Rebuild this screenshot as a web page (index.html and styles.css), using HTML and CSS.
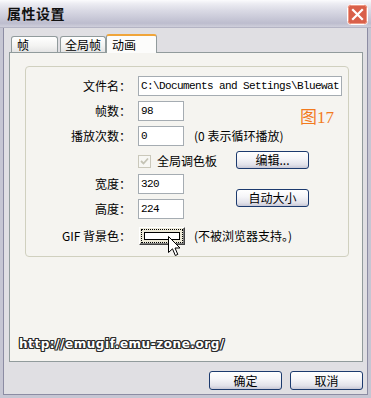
FILE: index.html
```html
<!DOCTYPE html>
<html lang="zh-CN">
<head>
    <meta charset="UTF-8">
    <title>属性设置</title>
    <link rel="stylesheet" href="styles.css">
</head>
<body>
    <div class="window">
        <div class="titlebar">
            <span class="title">属性设置</span>
            <button class="close" aria-label="关闭">
                <svg width="21" height="21" viewBox="0 0 21 21">
                    <rect x="0.5" y="0.5" width="20" height="20" rx="3" fill="#d9604a" stroke="#ffffff"/>
                    <rect x="1.5" y="1.5" width="18" height="18" rx="2" fill="none" stroke="#ef9a86"/>
                    <path d="M6 6 L15 15 M15 6 L6 15" stroke="#ffffff" stroke-width="2.2" stroke-linecap="square"/>
                </svg>
            </button>
        </div>

        <div class="client">
            <div class="tabs">
                <div class="tab">帧</div>
                <div class="tab tab-wide">全局帧</div>
                <div class="tab active">动画</div>
            </div>

            <div class="panel">
                <div class="group">
                    <div class="form">
                        <label class="lbl">文件名：</label>
                        <input class="field field-file" type="text" value="C:\Documents and Settings\Bluewat">

                        <label class="lbl">帧数：</label>
                        <input class="field" type="text" value="98">
                        <span></span>

                        <label class="lbl">播放次数：</label>
                        <input class="field" type="text" value="0">
                        <span class="hint">(0 表示循环播放)</span>

                        <span></span>
                        <div class="check-row">
                            <div class="check-wrap">
                                <span class="checkbox">
                                    <svg width="9" height="9" viewBox="0 0 9 9">
                                        <path d="M1 4 L3.5 6.5 L8 1.5" fill="none" stroke="#c4c3b5" stroke-width="1.8"/>
                                    </svg>
                                </span>
                                <span>全局调色板</span>
                            </div>
                            <button class="btn">编辑...</button>
                        </div>

                        <label class="lbl">宽度：</label>
                        <input class="field" type="text" value="320">
                        <div class="auto-cell">
                            <button class="btn">自动大小</button>
                        </div>

                        <label class="lbl">高度：</label>
                        <input class="field" type="text" value="224">

                        <label class="lbl lbl-last">GIF 背景色：</label>
                        <div class="color-cell">
                            <button class="color-btn"><span class="swatch"></span></button>
                            <svg class="cursor" width="13" height="21" viewBox="0 0 13 21">
                                <path d="M0.5 0.5 L0.5 16.5 L4.5 12.8 L7.3 19.5 L9.8 18.4 L7 12 L12 12 Z" fill="#ffffff" stroke="#000000" stroke-width="1"/>
                            </svg>
                        </div>
                        <span class="hint hint-last">(不被浏览器支持。)</span>
                    </div>
                    <span class="note">图17</span>
                </div>

                <div class="url">http://emugif.emu-zone.org/</div>
            </div>

            <div class="actions">
                <button class="btn">确定</button>
                <button class="btn">取消</button>
            </div>
        </div>
    </div>
</body>
</html>
```

FILE: styles.css
```css
* {
    margin: 0;
    padding: 0;
    box-sizing: border-box;
    font-family: 'Noto Sans CJK SC', sans-serif;
}

body {
    background-color: #e0dfe3;
}

.window {
    width: 371px;
    height: 398px;
    display: flex;
    flex-direction: column;
    background-color: #e0dfe3;
}

.titlebar {
    height: 28px;
    display: flex;
    align-items: center;
    justify-content: space-between;
    padding: 0 3px 0 7px;
    background: linear-gradient(to bottom, #fbfbfd 0%, #ececf2 14%, #d9d9e4 40%, #c8c8d7 68%, #bdbdce 86%, #cfcfdb 100%);
    border-bottom: 1px solid #b4b4c4;
}

.title {
    font-size: 14px;
    font-weight: bold;
    color: #111;
    letter-spacing: 0.5px;
    margin-top: -1px;
}

.close {
    width: 21px;
    height: 21px;
    border: none;
    background: none;
    display: block;
    margin-top: 1px;
}

.close svg {
    display: block;
}

.client {
    flex: 1;
    display: flex;
    flex-direction: column;
    border: solid #c6c6d3;
    border-width: 0 3px 3px;
    box-shadow: inset 1px 0 #8c8ca3, inset -1px 0 #8c8ca3, inset 0 -1px #8c8ca3;
}

/* tabs */
.tabs {
    display: flex;
    align-items: flex-end;
    padding: 6px 0 0 8px;
    height: 24px;
}

.tab {
    width: 47px;
    height: 16px;
    margin-right: 2px;
    padding: 0 0 0 5px;
    font-size: 12px;
    line-height: 15px;
    color: #000;
    border: 1px solid #919b9c;
    border-bottom: none;
    border-radius: 3px 3px 0 0;
    background: linear-gradient(to bottom, #ffffff, #f3f3f1 60%, #e4e4e4);
}

.tab-wide {
    width: 46px;
    padding-left: 4px;
    margin-right: 0;
}

.tab.active {
    width: 51px;
    height: 19px;
    padding-left: 5px;
    line-height: 17px;
    background: #fcfcfb;
    border-top: 2px solid #f0a53a;
    margin-bottom: -1px;
    position: relative;
}

.panel {
    height: 310px;
    margin: 0 5px 0 6px;
    border: 1px solid #919b9c;
    background-color: #f5f4f0;
    padding: 13px 0 0 15px;
}

/* group box */
.group {
    position: relative;
    width: 324px;
    height: 191px;
    border: 1px solid #d0d0bf;
    border-radius: 4px;
    padding: 9px 6px 0 0;
}

.form {
    display: grid;
    grid-template-columns: 112px 46px 1fr;
    grid-template-rows: 20px 20px 20px 18px 20px 20px 21px;
    row-gap: 5px;
    font-size: 12px;
    color: #000;
}

.lbl {
    text-align: right;
    padding-right: 7px;
    align-self: center;
    font-size: 12px;
    line-height: 14px;
}

.lbl-last {
    margin-top: 3px;
}

.field {
    width: 46px;
    height: 20px;
    border: 1px solid #a5acb2;
    background: #fff;
    padding: 0 0 0 2px;
    font-family: 'Liberation Mono', monospace;
    font-size: 11px;
    letter-spacing: -0.6px;
    color: #000;
    outline: none;
}

.field-file {
    grid-column: 2 / 4;
    width: 204px;
}

.hint {
    align-self: center;
    margin-left: 10px;
    white-space: nowrap;
    line-height: 14px;
}

.hint-last {
    margin-top: 3px;
}

.check-row {
    grid-column: 2 / 4;
    display: flex;
    align-items: center;
}

.check-wrap {
    width: 98px;
    display: flex;
    align-items: center;
    gap: 6px;
    white-space: nowrap;
}

.checkbox {
    width: 13px;
    height: 13px;
    border: 1px solid #cac8bb;
    background: #f7f7f4;
    display: flex;
    align-items: center;
    justify-content: center;
    margin-top: 2px;
}

.checkbox svg {
    display: block;
}

.auto-cell {
    grid-row: span 2;
    display: flex;
    align-items: center;
    padding-left: 52px;
    padding-top: 3px;
}

.btn {
    width: 73px;
    height: 18px;
    border: 1px solid #1c3a6e;
    border-radius: 3px;
    background: linear-gradient(to bottom, #ffffff 0%, #f6f6f9 40%, #e2e2ea 80%, #c8c8d6 100%);
    font-size: 12px;
    line-height: 14px;
    color: #000;
}

.color-cell {
    position: relative;
    align-self: end;
    padding-left: 1px;
}

.color-btn {
    width: 46px;
    height: 18px;
    display: block;
    background: #ece9d8;
    border: 1px solid;
    border-color: #ffffff #404040 #404040 #ffffff;
    box-shadow: inset -1px -1px #808080;
    padding: 2px;
}

.swatch {
    display: block;
    height: 12px;
    outline: 1px dotted #000;
    outline-offset: 0;
    border: 2px solid #ece9d8;
    background: #fff;
    box-shadow: inset 0 0 0 1px #000;
}

.cursor {
    position: absolute;
    left: 30px;
    top: 9px;
}

.note {
    position: absolute;
    left: 274px;
    top: 36px;
    font-family: 'Liberation Serif', 'Noto Sans CJK SC', serif;
    font-size: 17px;
    color: #f27a1e;
}

.url {
    margin: 80px 0 0 -6px;
    font-family: 'DejaVu Sans', sans-serif;
    font-weight: bold;
    font-size: 12px;
    letter-spacing: 0.55px;
    color: #ffffff;
    text-shadow: 1px 0 #2a2a2a, -1px 0 #2a2a2a, 0 1px #2a2a2a, 0 -1px #2a2a2a,
        1px 1px #2a2a2a, -1px -1px #2a2a2a, 1px -1px #2a2a2a, -1px 1px #2a2a2a;
}

.actions {
    display: flex;
    justify-content: flex-end;
    gap: 8px;
    padding: 9px 5px 0 0;
}

.actions .btn {
    height: 19px;
}
```
